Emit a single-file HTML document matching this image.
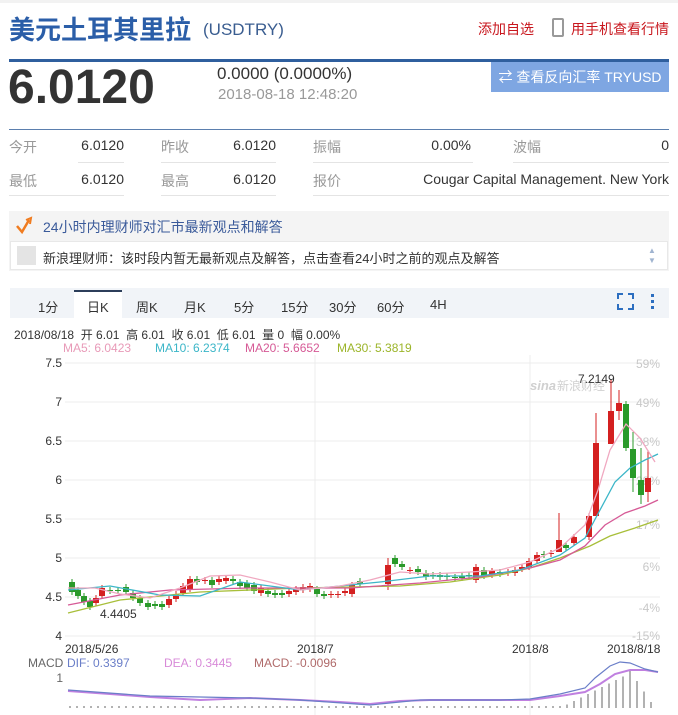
<!DOCTYPE html>
<html><head><meta charset="utf-8">
<style>
*{margin:0;padding:0;box-sizing:border-box}
body{width:678px;height:715px;overflow:hidden;background:#fff;font-family:"Liberation Sans","Noto Sans CJK SC",sans-serif;position:relative;color:#333}
.a{position:absolute;white-space:nowrap}
</style></head><body>
<div class="a" style="left:0;top:0;width:678px;height:3px;background:#f2f2f2"></div>
<div class="a" style="left:9px;top:10px;font-size:26px;font-weight:bold;color:#2b5ea8">美元土耳其里拉</div>
<div class="a" style="left:203px;top:20px;font-size:17px;color:#3a5d90">(USDTRY)</div>
<div class="a" style="left:478px;top:19px;font-size:14px;color:#c8161d">添加自选</div>
<div class="a" style="left:552px;top:18px;width:12px;height:19px;border:2px solid #999;border-radius:2px"></div>
<div class="a" style="left:571px;top:19px;font-size:14px;color:#c8161d">用手机查看行情</div>
<div class="a" style="left:9px;top:59px;width:660px;height:3px;background:#2f5f9e"></div>
<div class="a" style="left:8px;top:60px;font-size:48px;font-weight:bold;color:#333">6.0120</div>
<div class="a" style="left:217px;top:64px;font-size:17px;color:#333">0.0000 (0.0000%)</div>
<div class="a" style="left:218px;top:86px;font-size:15px;color:#999">2018-08-18 12:48:20</div>
<div class="a" style="left:491px;top:62px;width:178px;height:30px;background:#7ea6e2;color:#fff;font-size:14px;line-height:30px;text-align:center">⇄ 查看反向汇率 TRYUSD</div>
<div class="a" style="left:9px;top:129px;width:660px;height:1px;background:#5b7fae"></div>
<div class="a" style="left:9px;top:137px;font-size:14px;color:#999">今开</div>
<div class="a" style="left:78px;top:137px;font-size:14px;width:46px;text-align:right">6.0120</div>
<div class="a" style="left:161px;top:137px;font-size:14px;color:#999">昨收</div>
<div class="a" style="left:200px;top:137px;font-size:14px;width:76px;text-align:right">6.0120</div>
<div class="a" style="left:313px;top:137px;font-size:14px;color:#999">振幅</div>
<div class="a" style="left:380px;top:137px;font-size:14px;width:91px;text-align:right">0.00%</div>
<div class="a" style="left:513px;top:137px;font-size:14px;color:#999">波幅</div>
<div class="a" style="left:600px;top:137px;font-size:14px;width:69px;text-align:right">0</div>
<div class="a" style="left:9px;top:171px;font-size:14px;color:#999">最低</div>
<div class="a" style="left:78px;top:171px;font-size:14px;width:46px;text-align:right">6.0120</div>
<div class="a" style="left:161px;top:171px;font-size:14px;color:#999">最高</div>
<div class="a" style="left:200px;top:171px;font-size:14px;width:76px;text-align:right">6.0120</div>
<div class="a" style="left:313px;top:171px;font-size:14px;color:#999">报价</div>
<div class="a" style="left:380px;top:171px;font-size:14px;width:289px;text-align:right">Cougar Capital Management. New York</div>
<div class="a" style="left:78px;top:162px;width:46px;height:1px;background:#e4e4e4"></div>
<div class="a" style="left:161px;top:162px;width:115px;height:1px;background:#e4e4e4"></div>
<div class="a" style="left:313px;top:162px;width:160px;height:1px;background:#e4e4e4"></div>
<div class="a" style="left:513px;top:162px;width:156px;height:1px;background:#e4e4e4"></div>
<div class="a" style="left:9px;top:195px;width:115px;height:1px;background:#e4e4e4"></div>
<div class="a" style="left:161px;top:195px;width:115px;height:1px;background:#e4e4e4"></div>
<div class="a" style="left:313px;top:195px;width:356px;height:1px;background:#e4e4e4"></div>

<div class="a" style="left:9px;top:211px;width:660px;height:60px;background:#f4f4f4"></div>
<svg class="a" style="left:15px;top:216px" width="20" height="20"><path d="M2 10 L7 16 L14 4" stroke="#f07c20" stroke-width="2.5" fill="none"/><path d="M11 4 L16 2 L15 8" stroke="#f07c20" stroke-width="2" fill="none"/></svg>
<div class="a" style="left:43px;top:217px;font-size:14px;color:#3a5a9a">24小时内理财师对汇市最新观点和解答</div>
<div class="a" style="left:10px;top:241px;width:658px;height:29px;background:#fff;border:1px solid #e8e8e8"></div>
<div class="a" style="left:17px;top:246px;width:19px;height:19px;background:#e4e4e4"></div>
<div class="a" style="left:43px;top:248px;font-size:13px;color:#333">新浪理财师：该时段内暂无最新观点及解答，点击查看24小时之前的观点及解答</div>
<div class="a" style="left:648px;top:246px;font-size:8px;color:#a0b4d0;line-height:10px">▲<br>▼</div>

<div class="a" style="left:10px;top:288px;width:659px;height:30px;background:#f1f4f8"></div>
<div class="a" style="left:74px;top:290px;width:48px;height:28px;background:#fff;border-top:2px solid #2c3e5a"></div>
<div class="a" style="left:38px;top:297px;font-size:13px">1分</div>
<div class="a" style="left:87px;top:297px;font-size:13px">日K</div>
<div class="a" style="left:136px;top:297px;font-size:13px">周K</div>
<div class="a" style="left:184px;top:297px;font-size:13px">月K</div>
<div class="a" style="left:234px;top:297px;font-size:13px">5分</div>
<div class="a" style="left:281px;top:297px;font-size:13px">15分</div>
<div class="a" style="left:329px;top:297px;font-size:13px">30分</div>
<div class="a" style="left:377px;top:297px;font-size:13px">60分</div>
<div class="a" style="left:430px;top:297px;font-size:13px">4H</div>
<svg class="a" style="left:617px;top:293px" width="45" height="20"><g stroke="#2c6ec0" stroke-width="2" fill="none"><path d="M1 6V1H6M11 1H16V6M16 11V16H11M6 16H1V11"/></g><g fill="#2c6ec0"><rect x="34" y="1" width="3" height="3"/><rect x="34" y="7" width="3" height="3"/><rect x="34" y="13" width="3" height="3"/></g></svg>

<div class="a" style="left:14px;top:326px;font-size:12px;color:#333">2018/08/18&nbsp; 开 6.01&nbsp; 高 6.01&nbsp; 收 6.01&nbsp; 低 6.01&nbsp; 量 0&nbsp; 幅 0.00%</div>
<div class="a" style="left:63px;top:341px;font-size:12px;color:#e89ab8">MA5: 6.0423</div>
<div class="a" style="left:155px;top:341px;font-size:12px;color:#3cb6c8">MA10: 6.2374</div>
<div class="a" style="left:245px;top:341px;font-size:12px;color:#d65a96">MA20: 5.6652</div>
<div class="a" style="left:337px;top:341px;font-size:12px;color:#9cb52a">MA30: 5.3819</div>

<svg class="a" style="left:0;top:350px" width="678" height="365" id="ch">
<g stroke="#ececec" stroke-width="1">
<line x1="65" y1="13" x2="660" y2="13"/><line x1="65" y1="52" x2="660" y2="52"/><line x1="65" y1="91" x2="660" y2="91"/><line x1="65" y1="130" x2="660" y2="130"/><line x1="65" y1="169" x2="660" y2="169"/><line x1="65" y1="208" x2="660" y2="208"/><line x1="65" y1="247" x2="660" y2="247"/><line x1="65" y1="286" x2="660" y2="286"/>
<line x1="315" y1="5" x2="315" y2="365"/><line x1="530" y1="5" x2="530" y2="365"/>
</g>
<g font-size="12" fill="#333" text-anchor="end"><text x="62" y="17">7.5</text><text x="62" y="56">7</text><text x="62" y="95">6.5</text><text x="62" y="134">6</text><text x="62" y="173">5.5</text><text x="62" y="212">5</text><text x="62" y="251">4.5</text><text x="62" y="290">4</text></g>
<g font-size="12" fill="#c8c8c8" text-anchor="end"><text x="660" y="18">59%</text><text x="660" y="57">49%</text><text x="660" y="96">38%</text><text x="660" y="135">28%</text><text x="660" y="179">17%</text><text x="660" y="221">6%</text><text x="660" y="262">-4%</text><text x="660" y="290">-15%</text></g>
<text x="530" y="40" font-size="13" fill="#d0d0d0" font-style="italic" font-weight="bold">sina</text><text x="557" y="40" font-size="12" fill="#d0d0d0">新浪财经</text>
<g font-size="12" fill="#333"><text x="65" y="303">2018/5/26</text><text x="297" y="303">2018/7</text><text x="512" y="303">2018/8</text><text x="607" y="303">2018/8/18</text><text x="578" y="33">7.2149</text><text x="100" y="268">4.4405</text></g>
<g id="cd"></g>
<g fill="none" stroke-width="1.3">
<polyline stroke="#a8bf3a" points="68,263 120,250 200,242 300,238 400,236 450,232 500,225 530,218 560,208 590,196 610,186 635,178 658,170"/>
<polyline stroke="#d65a96" points="68,255 120,245 170,240 250,238 350,238 420,233 480,227 530,218 560,210 585,196 605,175 625,163 645,156 658,150"/>
<polyline stroke="#3cb6c8" points="68,240 110,236 160,245 200,246 240,232 300,240 340,236 380,232 430,226 480,226 520,220 560,205 585,188 600,160 615,132 630,118 645,110 658,104"/>
<polyline stroke="#f0a8c0" points="68,238 95,238 120,244 150,248 180,238 210,226 240,225 270,232 300,240 340,236 370,230 400,222 430,224 470,222 500,220 530,212 560,198 585,175 598,140 610,100 626,74 640,88 655,112"/>
</g>
<text x="28" y="317" font-size="12" fill="#666">MACD</text>
<text x="67" y="317" font-size="12" fill="#6a7ec8">DIF: 0.3397</text>
<text x="164" y="317" font-size="12" fill="#d88ad8">DEA: 0.3445</text>
<text x="254" y="317" font-size="12" fill="#b06a6a">MACD: -0.0096</text>
<text x="63" y="332" font-size="12" fill="#666" text-anchor="end">1</text>
<g id="mh" stroke="#666" stroke-width="1"></g>
<polyline fill="none" stroke="#c080e0" stroke-width="2" points="68,341 110,344 150,347 200,350 250,348 300,350 340,352 370,354 400,351 430,350 470,350 500,350 530,350 560,346 585,342 600,334 615,324 630,320 645,320 658,322"/>
<polyline fill="none" stroke="#6a7ec8" stroke-width="1.2" points="68,340 150,346 250,348 300,350 370,355 420,350 500,350 530,349 560,344 585,338 595,328 610,316 620,312 630,313 645,319 658,322"/>
</svg>
<script>
var cd=document.getElementById('cd'),s='';
var C=[[72,232,242,'g'],[78,240,246,'g'],[84,246,252,'g'],[90,251,257,'g'],[96,248,253,'r'],[102,238,246,'r'],[110,240,241,'g'],[118,240,241,'g'],[126,237,242,'g'],[133,243,248,'g'],[140,248,253,'g'],[148,253,257,'g'],[155,254,256,'g'],[162,254,257,'g'],[169,249,255,'r'],[176,244,249,'r'],[183,236,243,'r'],[190,229,239,'r'],[197,229,232,'g'],[205,230,231,'r'],[212,230,235,'g'],[219,229,232,'r'],[226,228,231,'r'],[233,229,231,'g'],[240,232,236,'g'],[247,233,238,'g'],[254,235,241,'g'],[261,238,243,'r'],[268,241,244,'g'],[275,243,245,'g'],[282,243,245,'g'],[289,241,244,'r'],[296,239,242,'r'],[303,237,240,'r'],[310,236,239,'r'],[317,239,244,'g'],[324,244,246,'g'],[331,244,245,'r'],[338,244,245,'r'],[345,241,243,'r'],[352,235,244,'r'],[360,231,234,'g'],[388,215,234,'r'],[395,208,214,'g'],[402,214,217,'g'],[410,220,221,'r'],[418,219,222,'g'],[426,223,227,'g'],[433,225,226,'g'],[440,225,227,'g'],[447,226,227,'g'],[455,227,228,'g'],[462,226,228,'g'],[469,225,226,'g'],[476,217,230,'r'],[484,220,226,'g'],[492,221,225,'r'],[500,222,224,'g'],[508,222,223,'r'],[515,220,223,'r'],[522,217,219,'r'],[529,211,217,'r'],[537,205,211,'r'],[544,204,205,'g'],[551,203,204,'r'],[559,190,202,'r'],[566,195,198,'g'],[574,187,193,'r'],[589,166,187,'r'],[596,93,166,'r'],[611,61,94,'r'],[619,53,61,'r'],[626,54,98,'g'],[633,99,128,'g'],[641,130,145,'g'],[648,128,142,'r']];
var W={596:[63,166],611:[30,94],619:[40,70],633:[82,142],641:[98,154],648:[100,152],559:[163,202],388:[208,240]};
C.forEach(function(c){var col=c[3]=='r'?'#d42020':'#2a9a2a';var w=W[c[0]];var t=w?w[0]:c[1]-3,b=w?w[1]:c[2]+3;
s+='<line x1="'+c[0]+'" y1="'+t+'" x2="'+c[0]+'" y2="'+b+'" stroke="'+col+'"/><rect x="'+(c[0]-3)+'" y="'+c[1]+'" width="6" height="'+Math.max(1,c[2]-c[1])+'" fill="'+col+'"/>';});
cd.innerHTML=s;
var m='';for(var x=70;x<655;x+=7){var h=0;if(x>560){h=Math.max(0,(x-560)*0.5);if(x>625)h=Math.max(0,45-(x-625)*1.5);}else h=2;m+='<line x1="'+x+'" y1="'+(358-h)+'" x2="'+x+'" y2="358"/>';}
document.getElementById('mh').innerHTML=m;
</script>
</body></html>
